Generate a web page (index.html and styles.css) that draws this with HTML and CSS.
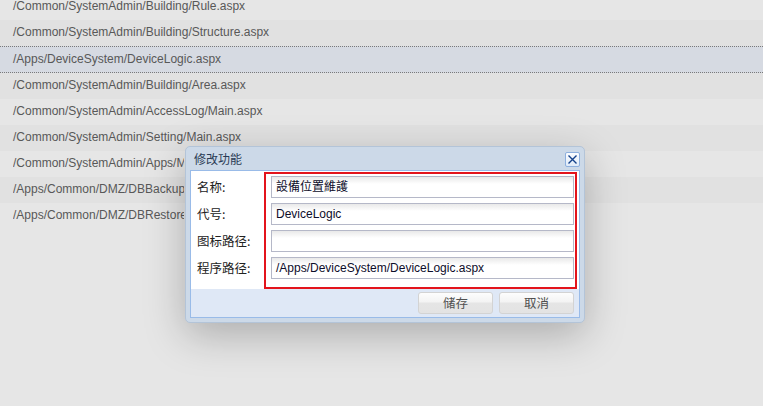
FILE: index.html
```html
<!DOCTYPE html>
<html>
<head>
<meta charset="utf-8">
<link rel="stylesheet" href="styles.css">
</head>
<body>
<div class="list">
  <div class="row">/Common/SystemAdmin/Building/Rule.aspx</div>
  <div class="row">/Common/SystemAdmin/Building/Structure.aspx</div>
  <div class="row selected">/Apps/DeviceSystem/DeviceLogic.aspx</div>
  <div class="row">/Common/SystemAdmin/Building/Area.aspx</div>
  <div class="row">/Common/SystemAdmin/AccessLog/Main.aspx</div>
  <div class="row">/Common/SystemAdmin/Setting/Main.aspx</div>
  <div class="row"><span class="cut">/Common/SystemAdmin/Apps/Main.aspx</span></div>
  <div class="row"><span class="cut">/Apps/Common/DMZ/DBBackup.aspx</span></div>
  <div class="row"><span class="cut">/Apps/Common/DMZ/DBRestore.aspx</span></div>
</div>

<div class="dialog">
  <div class="dlg-head">
    <span class="dlg-title">修改功能</span>
    <span class="dlg-close">
      <svg width="11" height="11" viewBox="0 0 11 11"><path d="M1.5 1.5 L9.5 9.5 M9.5 1.5 L1.5 9.5" stroke="#15428b" stroke-width="1.4" fill="none"/></svg>
    </span>
  </div>
  <div class="dlg-body">
    <div class="form">
      <div class="labels">
        <div class="label">名称:</div>
        <div class="label">代号:</div>
        <div class="label">图标路径:</div>
        <div class="label">程序路径:</div>
      </div>
      <div class="fields">
        <div class="field">設備位置維護</div>
        <div class="field">DeviceLogic</div>
        <div class="field"></div>
        <div class="field">/Apps/DeviceSystem/DeviceLogic.aspx</div>
      </div>
    </div>
    <div class="footer">
      <button class="btn">储存</button>
      <button class="btn">取消</button>
    </div>
  </div>
</div>
</body>
</html>
```
FILE: styles.css
```css
html, body {
  margin: 0;
  padding: 0;
  background: #e6e6e6;
  width: 763px;
  height: 406px;
  overflow: hidden;
  font-family: "Liberation Sans", Tahoma, "Noto Sans CJK SC", sans-serif;
}

.list {
  margin-top: -6px;
}

.row {
  height: 24px;
  line-height: 24px;
  padding-bottom: 2px;
  padding-left: 13px;
  font-size: 12px;
  color: #585858;
  white-space: nowrap;
  background: #e6e6e6;
}

.row:nth-child(even) {
  background: #e1e1e1;
}

.row.selected {
  height: 24px;
  line-height: 24px;
  padding-bottom: 1px;
  background: #d6dae2;
  border-top: 1px dotted #7a7a7a;
  border-bottom: 1px dotted #7a7a7a;
}

.cut {
  display: inline-block;
  width: 171px;
  overflow: hidden;
  vertical-align: top;
}

.dialog {
  position: absolute;
  left: 185px;
  top: 146px;
  width: 390px;
  padding: 0 4px 4px 4px;
  border: 1px solid #b3c4d8;
  border-radius: 5px;
  background: #ccd9e8;
  box-shadow: 0 12px 40px rgba(0, 0, 0, 0.25);
}

.dlg-head {
  height: 23px;
  display: flex;
  align-items: center;
  justify-content: space-between;
}

.dlg-title {
  padding-left: 4px;
  font-size: 12px;
  color: #2a3b55;
  font-family: "Noto Sans CJK SC", sans-serif;
}

.dlg-close {
  width: 13px;
  height: 13px;
  margin-top: 1px;
  border: 1px solid #8eb0de;
  border-radius: 2px;
  background: linear-gradient(#fbfdff, #dfeaf8);
  display: flex;
  align-items: center;
  justify-content: center;
}

.dlg-body {
  border: 1px solid #99bbe8;
  background: #fff;
}

.form {
  display: flex;
  height: 118px;
  background: #fff;
}

.labels {
  width: 73px;
  padding-left: 6px;
  box-sizing: border-box;
  padding-top: 5px;
  display: flex;
  flex-direction: column;
  gap: 5px;
}

.label {
  height: 22px;
  line-height: 22px;
  font-size: 12.5px;
  color: #222;
  font-family: "Noto Sans CJK SC", sans-serif;
  white-space: nowrap;
}

.fields {
  width: 313px;
  height: 117px;
  margin-top: 1px;
  box-sizing: border-box;
  border: 2px solid #e3141c;
  padding: 2px 1px 0 5px;
  display: flex;
  flex-direction: column;
  gap: 5px;
}

.field {
  height: 22px;
  box-sizing: border-box;
  border: 1px solid #b5b8c8;
  background: linear-gradient(#e9e9e9, #ffffff 7px);
  font-size: 12px;
  line-height: 20px;
  padding-left: 4px;
  color: #0d0d2a;
  font-family: "Liberation Sans", Tahoma, "Noto Sans CJK TC", sans-serif;
  white-space: nowrap;
}

.footer {
  height: 28px;
  background: #dfe8f6;
  display: flex;
  justify-content: flex-end;
  align-items: center;
  gap: 6px;
  padding-right: 5px;
}

.btn {
  width: 75px;
  height: 22px;
  margin: 0;
  padding: 0;
  border: 1px solid #d3d3d3;
  border-radius: 3px;
  background: linear-gradient(#fdfdfd 0%, #f3f3f3 45%, #e5e5e5 50%, #e3e3e3 100%);
  font-size: 12.5px;
  color: #505050;
  font-family: "Noto Sans CJK SC", sans-serif;
  line-height: 20px;
}
```
